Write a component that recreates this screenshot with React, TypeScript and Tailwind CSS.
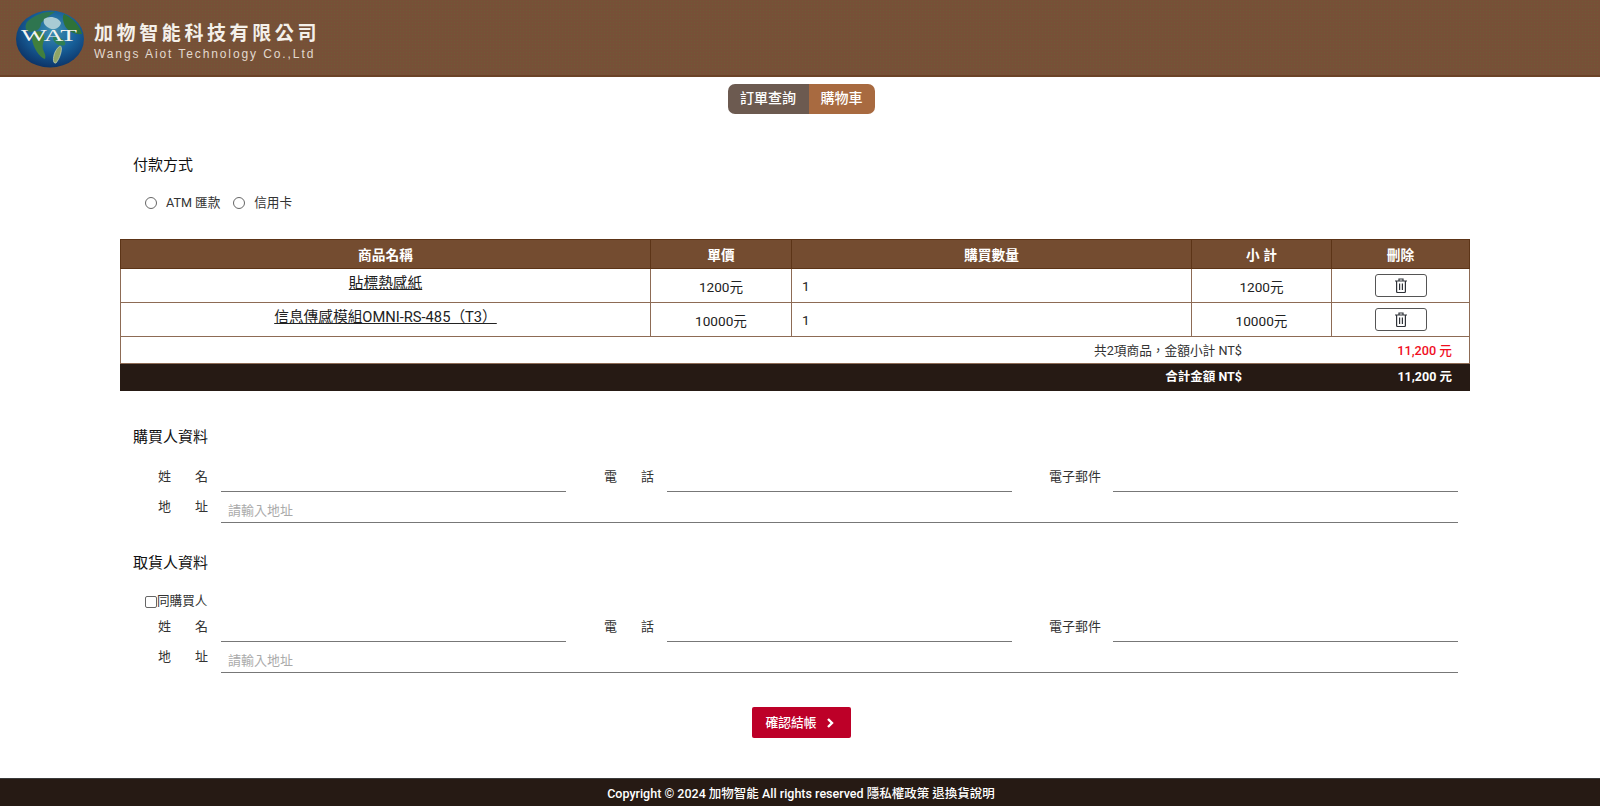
import React from "react";

const font = { fontFamily: 'Roboto, "Noto Sans CJK TC", sans-serif' };

function Logo() {
  return (
    <svg width="72" height="62" viewBox="0 0 72 62" className="shrink-0 ml-[-1px]">
      <defs>
        <radialGradient id="g" cx="55%" cy="35%" r="72%">
          <stop offset="0%" stopColor="#3f8fb0" />
          <stop offset="50%" stopColor="#175f99" />
          <stop offset="100%" stopColor="#0a2a5c" />
        </radialGradient>
        <filter id="b"><feGaussianBlur stdDeviation="0.7" /></filter>
      </defs>
      <ellipse cx="35" cy="32" rx="34" ry="28.5" fill="url(#g)" />
      <g filter="url(#b)">
        <path d="M12 15 C20 7 32 4 40 5 C34 9 30 12 26 16 C26 22 22 24 16 25 C11 25 9 20 12 15Z" fill="#2f7550" />
        <path d="M29 12 C34 8 44 10 46 16 C44 23 36 24 31 19 C29 17 28 15 29 12Z" fill="#a9cbd4" />
        <path d="M49 7 C58 11 65 19 67 27 C60 28 53 24 50 19 C48 14 47 10 49 7Z" fill="#2f7238" />
        <path d="M20 25 C28 22 32 30 28 36 C26 44 32 46 30 52 C24 50 18 40 17 32 C17 29 18 27 20 25Z" fill="#3f7f3e" />
        <path d="M38 30 C44 29 52 34 50 38 C44 40 38 36 38 30Z" fill="#2f7f55" />
      </g>
      <path d="M45 39 C48 39 46 50 41 56 C38 57 38 52 39 48 C40 44 43 40 45 39Z" fill="#8fa566" stroke="#dfe5c4" strokeWidth="0.6" />
      <text x="6" y="34" fontFamily='"Liberation Serif", serif' fontSize="17" fill="#f4f4f0" textLength="56" lengthAdjust="spacingAndGlyphs">WAT</text>
    </svg>
  );
}

function Trash() {
  return (
    <svg width="12" height="15" viewBox="0 0 12 15" fill="none" stroke="#2f3238" strokeWidth="1.2">
      <path d="M0 3h12M4 3V1h4v2M1.6 3v10.5a1 1 0 0 0 1 1h6.8a1 1 0 0 0 1-1V3M4.6 5.5v6.5M7.4 5.5v6.5" />
    </svg>
  );
}

function Person({ withCheck }: { withCheck?: boolean }) {
  const label = "text-[13px] text-[#333] leading-[30px]";
  return (
    <div className="ml-[13px] mr-[12px]">
      {withCheck && (
        <div className="flex items-center h-[18px] pl-[12px] text-[12.6px] text-[#333] mb-[2px]">
          <span className="w-[12px] h-[12px] border border-[#666] rounded-[2px] mt-[2px]" />
          <span>同購買人</span>
        </div>
      )}
      <div className="flex h-[30px]">
        <div className="flex w-[453px] items-start">
          <span className={`flex justify-between w-[50px] ml-[25px] ${label}`}><span>姓</span><span>名</span></span>
          <span className="ml-[13px] w-[345px] h-[30px] border-b border-[#777]" />
        </div>
        <div className="flex w-[446px] items-start ml-[18px]">
          <span className={`flex justify-between w-[50px] ${label}`}><span>電</span><span>話</span></span>
          <span className="ml-[13px] w-[345px] h-[30px] border-b border-[#777]" />
        </div>
        <div className="flex items-start ml-[-1px]">
          <span className={`w-[51px] whitespace-nowrap ${label}`}>電子郵件</span>
          <span className="ml-[13px] w-[345px] h-[30px] border-b border-[#777]" />
        </div>
      </div>
      <div className="flex h-[31px]">
        <span className={`flex justify-between w-[50px] ml-[25px] ${label}`}><span>地</span><span>址</span></span>
        <div className="ml-[13px] flex-1 border-b border-[#777] text-[13px] text-[#aaa] pl-[7px] leading-[37px]">請輸入地址</div>
      </div>
    </div>
  );
}

export default function App() {
  const th = "border border-[#5c3417] font-bold text-[13.7px] text-white text-center pt-[2px]";
  const td = "border border-[#8d6b55] text-[13.6px] text-[#222] text-center";
  const h2 = "ml-[13px] text-[15px] leading-[22px] font-normal text-[#111]";
  return (
    <div className="min-h-[806px] bg-white flex flex-col" style={font}>
      <header className="h-[77px] bg-[#775037] bg-[radial-gradient(circle,#6f5a36_0.8px,transparent_1px)] bg-[length:3px_3px] border-b-2 border-[#6a4327] flex items-center pl-[16px]">
        <Logo />
        <div className="ml-[7px] mt-[9px] flex flex-col">
          <span className="text-[19px] leading-[24px] font-bold text-[#f4f0ea] tracking-[3.6px]">加物智能科技有限公司</span>
          <span className="text-[12px] leading-[16px] text-[#e3d9cf] tracking-[1.9px]" style={{ fontFamily: '"Liberation Sans", sans-serif' }}>Wangs Aiot Technology Co.,Ltd</span>
        </div>
      </header>

      <nav className="flex justify-center mt-[7px] ml-[2px]">
        <div className="flex h-[30px] rounded-[7px] overflow-hidden text-[14px] font-medium text-white leading-[29px]">
          <span className="w-[81px] bg-[#6c5a50] text-center">訂單查詢</span>
          <span className="w-[66px] bg-[#a86a40] text-center">購物車</span>
        </div>
      </nav>

      <main className="mx-[120px] w-[1350px] flex-1">
        <h2 className={`mt-[40px] ${h2}`}>付款方式</h2>
        <div className="mt-[16px] ml-[25px] flex items-center h-[22px] text-[12.6px] text-[#333]">
          <span className="w-[12px] h-[12px] rounded-full border border-[#666]" />
          <span className="ml-[9px]">ATM 匯款</span>
          <span className="ml-[13px] w-[12px] h-[12px] rounded-full border border-[#666]" />
          <span className="ml-[9px]">信用卡</span>
        </div>

        <table className="mt-[25px] w-[1349px] table-fixed border-collapse">
          <colgroup>
            <col className="w-[530px]" />
            <col className="w-[141px]" />
            <col className="w-[400px]" />
            <col className="w-[140px]" />
            <col className="w-[138px]" />
          </colgroup>
          <thead>
            <tr className="h-[29px] bg-[#744c30]">
              <th className={th}>商品名稱</th>
              <th className={th}>單價</th>
              <th className={th}>購買數量</th>
              <th className={th}>小 計</th>
              <th className={th}>刪除</th>
            </tr>
          </thead>
          <tbody>
            {[
              ["貼標熱感紙", "1200元"],
              ["信息傳感模組OMNI-RS-485（T3）", "10000元"],
            ].map(([name, price]) => (
              <tr key={name} className="h-[34px]">
                <td className={td}><span className="underline relative top-[-2px] text-[14.7px]">{name}</span></td>
                <td className={td}><span className="relative top-[2px]">{price}</span></td>
                <td className={`${td} !text-left pl-[10px]`}><span className="relative top-[1px]">1</span></td>
                <td className={td}><span className="relative top-[2px]">{price}</span></td>
                <td className={td}>
                  <div className="mx-auto w-[52px] h-[23px] border border-[#555] rounded-[3px] flex items-center justify-center">
                    <Trash />
                  </div>
                </td>
              </tr>
            ))}
            <tr className="h-[27px]">
              <td colSpan={5} className="border border-[#8d6b55] p-0 pt-[2px]">
                <div className="flex justify-end text-[12.7px] text-[#333]">
                  <span>共2項商品，金額小計 NT$</span>
                  <span className="w-[227px] pr-[17px] text-right text-[#f00f1f] font-medium">11,200 元</span>
                </div>
              </td>
            </tr>
            <tr className="h-[27px] bg-[#261a14]">
              <td colSpan={5} className="border border-[#261a14] p-0 pt-[1px]">
                <div className="flex justify-end text-[12.5px] font-bold text-white">
                  <span>合計金額 NT$</span>
                  <span className="w-[227px] pr-[17px] text-right">11,200 元</span>
                </div>
              </td>
            </tr>
          </tbody>
        </table>

        <h2 className={`mt-[35px] ${h2}`}>購買人資料</h2>
        <div className="mt-[14px]"><Person /></div>

        <h2 className={`mt-[29px] ${h2}`}>取貨人資料</h2>
        <div className="mt-[18px]"><Person withCheck /></div>

        <div className="mt-[34px] flex justify-center ml-[12px]">
          <button className="w-[99px] h-[31px] bg-[#bd0028] rounded-[2px] text-white text-[12.8px] font-medium flex items-center justify-center gap-[9px] pr-[3px]">
            確認結帳
            <svg width="8" height="10" viewBox="0 0 8 10" fill="none" stroke="#fff" strokeWidth="2.4"><path d="M2 1l4 4-4 4" /></svg>
          </button>
        </div>
      </main>

      <footer className="h-[28px] bg-[#261a14] border-t border-[#3a3a3a] text-center text-[12.5px] font-medium text-white leading-[30px] pl-[2px]">
        Copyright © 2024 加物智能 All rights reserved 隱私權政策 退換貨說明
      </footer>
    </div>
  );
}
